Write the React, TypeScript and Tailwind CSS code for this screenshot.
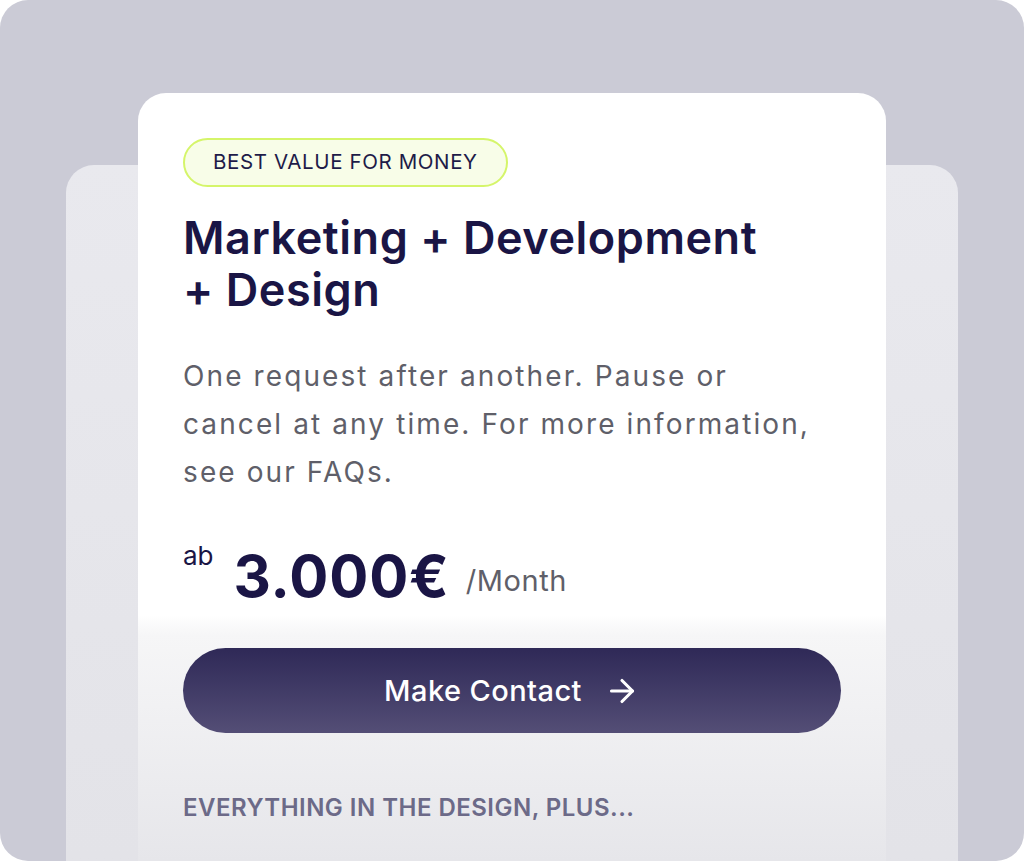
import { ArrowRight } from "lucide-react";

const font = { fontFamily: "Inter, 'Noto Sans', sans-serif" };

export default function App() {
  return (
    <div
      className="w-[1024px] h-[861px] overflow-hidden rounded-[28px] bg-[#cbcbd6] pt-[165px] px-[66px]"
      style={font}
    >
      <div className="flex h-full flex-col rounded-t-[28px] bg-gradient-to-b from-[#e9e9ee] to-[#e3e3e8] px-[72px]">
        <PricingCard />
      </div>
    </div>
  );
}

const PricingCard = () => {
  return (
    <div className="-mt-[72px] h-[768px] shrink-0 rounded-t-[28px] bg-[linear-gradient(to_bottom,#ffffff_0px,#ffffff_522px,#f6f6f7_542px,#e6e6ea_768px)] px-[45px] pt-[45px]">
      <span className="inline-flex h-[49px] items-center rounded-full border-2 border-[#d5f56a] bg-[#f8fde8] px-[28px] text-[20.5px] font-normal tracking-[0.03em] text-[#1e1b48]">
        BEST VALUE FOR MONEY
      </span>

      <h2 className="mt-[25px] text-[45px] font-semibold leading-[52px] tracking-[0.012em] text-[#1a1545]">
        Marketing + Development
        <br />+ Design
      </h2>

      <p className="mt-[36px] text-[28px] leading-[48px] tracking-[0.075em] text-[#5f5f69]">
        One request after another. Pause or
        <br />
        cancel at any time. For more information,
        <br />
        see our FAQs.
      </p>

      <div className="mt-[40px] flex items-end text-[#1a1545]">
        <span className="mb-[33px] text-[26px]">ab</span>
        <span className="ml-[20px] text-[58px] font-bold leading-[64px] tracking-[0.015em]">
          3.000€
        </span>
        <span className="mb-[6px] ml-[16px] text-[29px] tracking-[0.02em] text-[#5f5f69]">
          /Month
        </span>
      </div>

      <button className="mt-[40px] flex h-[85px] w-[658px] items-center justify-center gap-[22px] rounded-full bg-gradient-to-b from-[#2f2957] to-[#544e76] text-[29px] font-medium tracking-[0.015em] text-white">
        Make Contact
        <ArrowRight size={36} strokeWidth={2.1} />
      </button>

      <p className="mt-[57px] text-[24px] font-semibold tracking-[0.02em] text-[#6c6a88]">
        EVERYTHING IN THE DESIGN, PLUS...
      </p>
    </div>
  );
};
